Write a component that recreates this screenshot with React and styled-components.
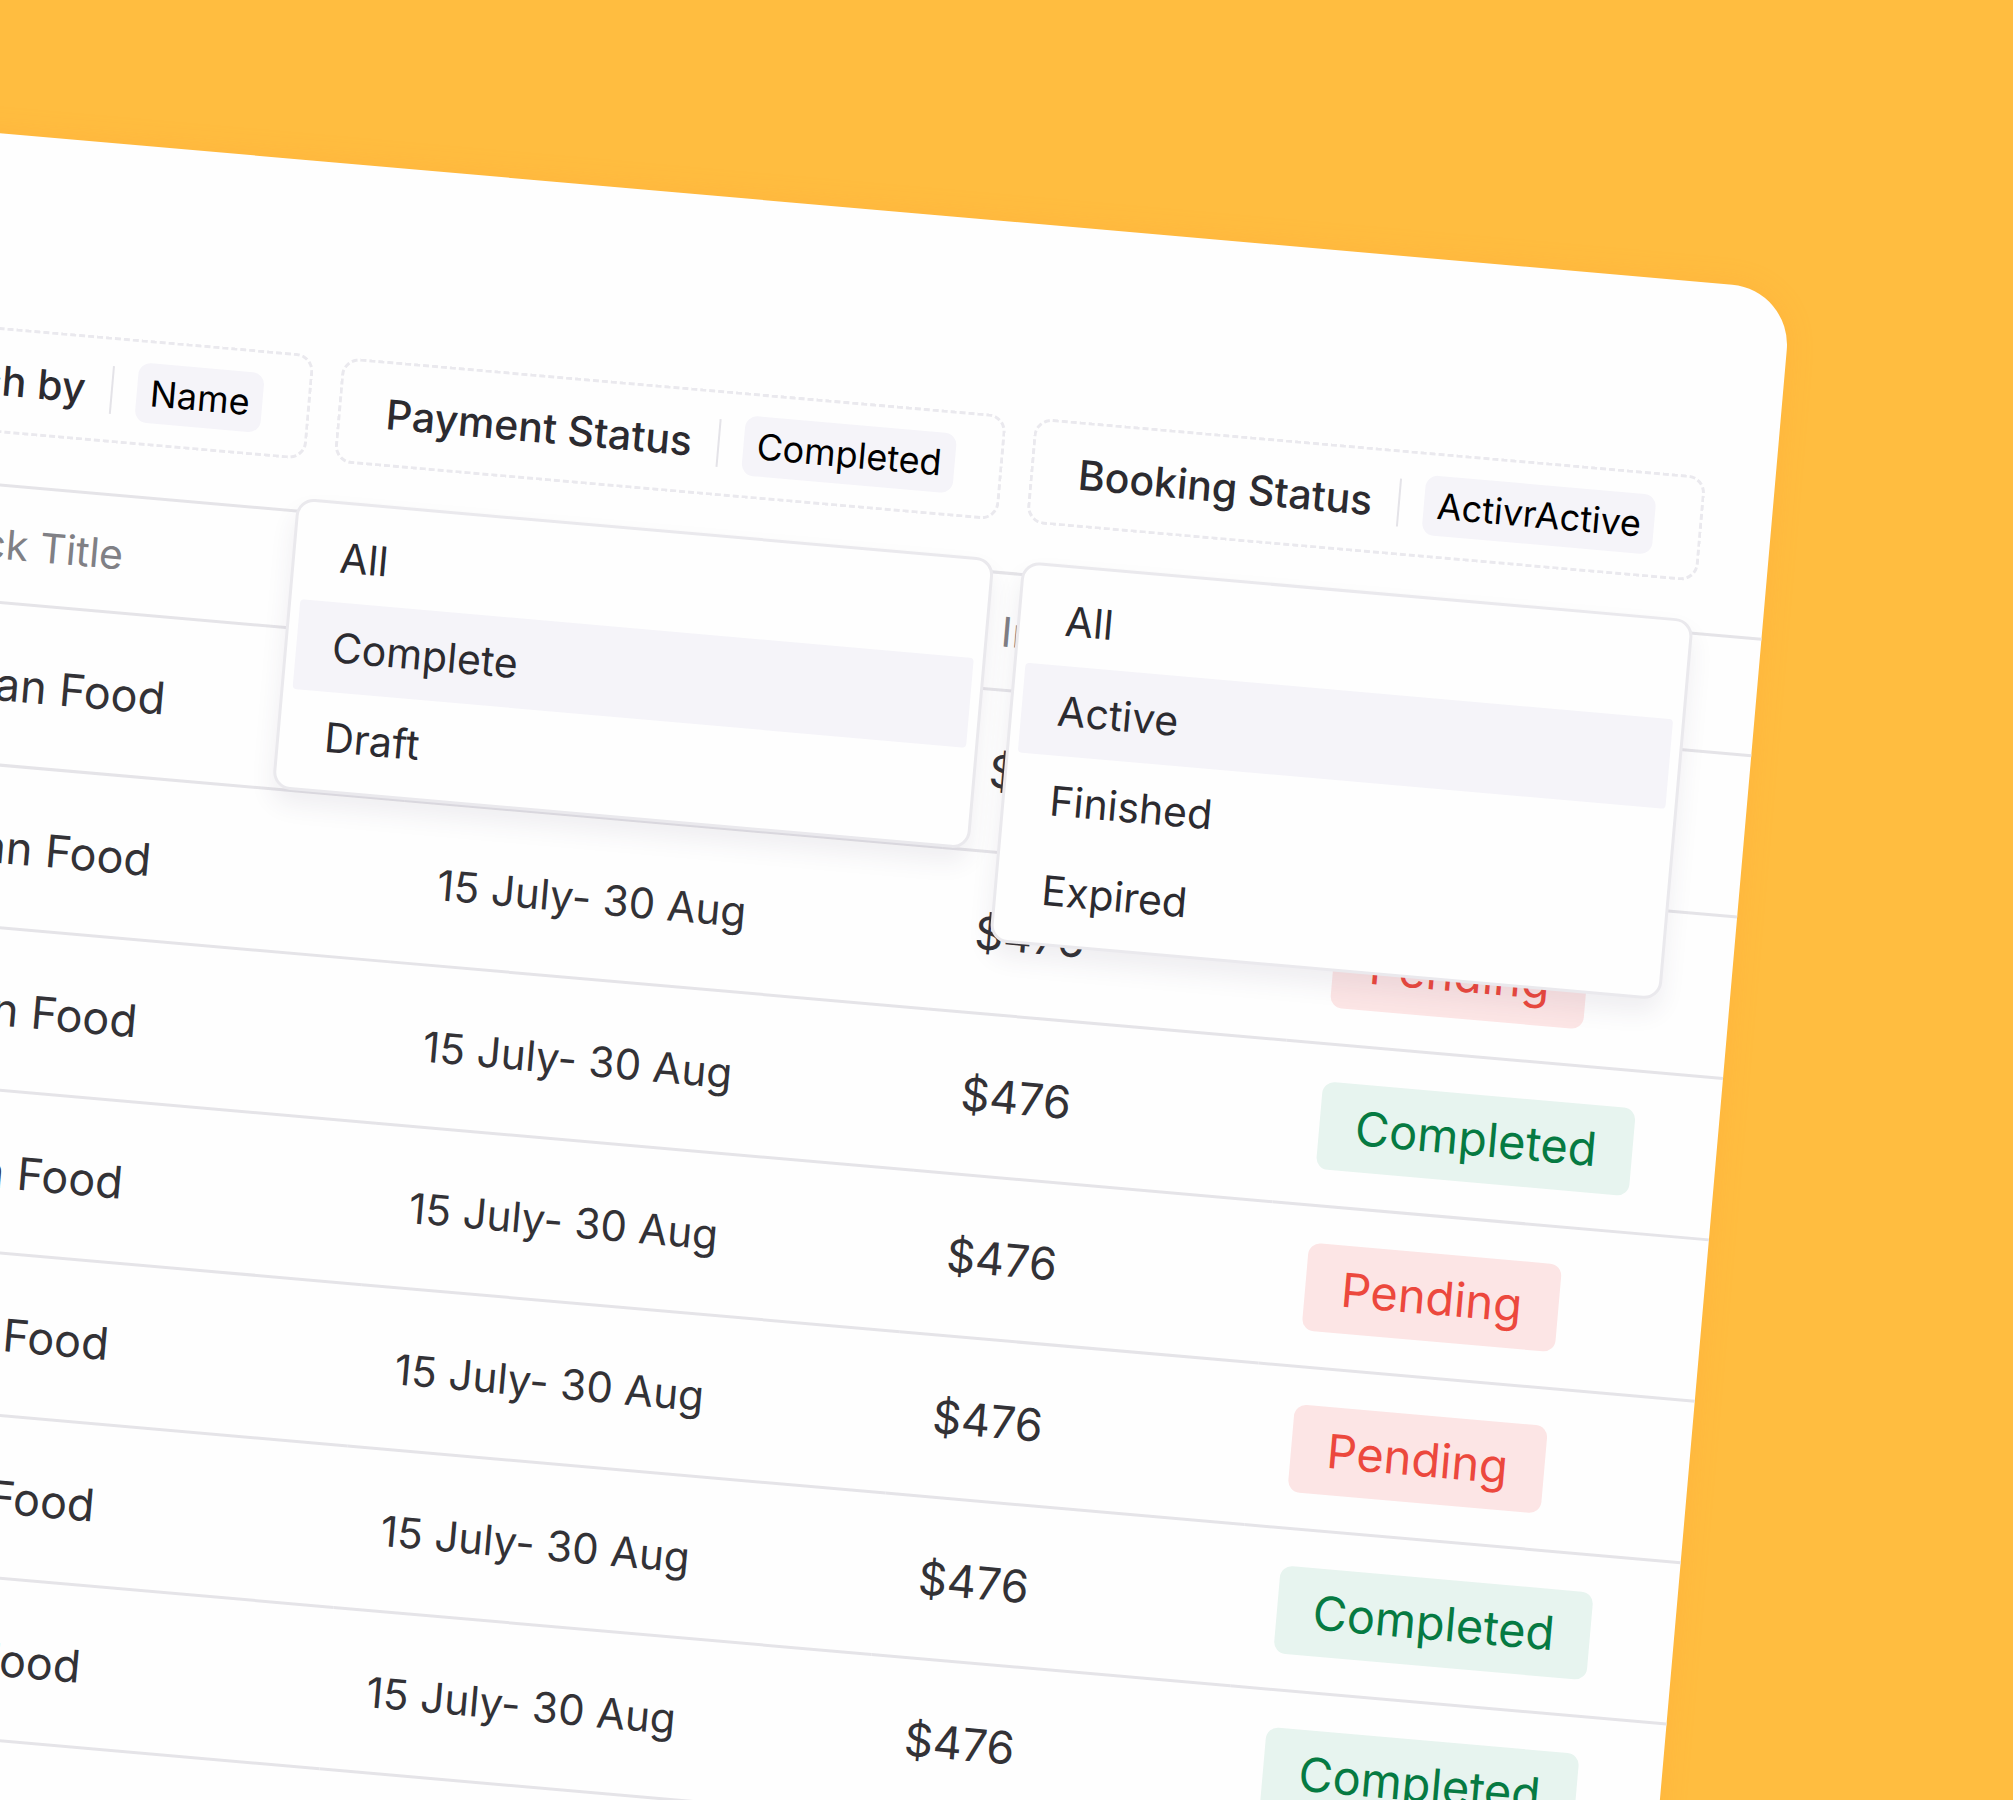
import React, { Component } from "react"
import styled, { createGlobalStyle } from "styled-components"

const GlobalStyle = createGlobalStyle`
  * {
    box-sizing: border-box;
  }

  body {
    margin: 0;
    background: #ffbd40;
  }

  button {
    font: inherit;
    color: inherit;
    cursor: pointer;
  }
`

const Stage = styled.main`
  display: flow-root;
  height: 100vh;
  overflow: hidden;
  background: #ffbd40;
  font-family: Inter, 'Open Sans', sans-serif;
  color: #2c2b30;
`

const Sheet = styled.section`
  margin: 290px 221px 0 -102px;
  padding-top: 193px;
  min-height: 100vh;
  background: #fefefe;
  border-radius: 60px;
  box-shadow: 0 0 28px rgba(255, 150, 50, 0.2);
  transform: rotate(5deg);
  transform-origin: top right;
`

const Filters = styled.div`
  display: flex;
  justify-content: flex-end;
  gap: 28px;
  margin-bottom: 50px;
  padding-right: 69px;
`

const FilterWrap = styled.div`
  position: relative;
  flex: none;
`

const FilterButton = styled.button`
  display: flex;
  align-items: center;
  height: 106px;
  padding: 0 45px;
  background: none;
  border: 3px dashed #eae9ee;
  border-radius: 18px;
`

const FilterLabel = styled.span`
  font-size: 41px;
  font-weight: 500;
  line-height: 48px;
  white-space: nowrap;
`

const Divider = styled.span`
  width: 2px;
  height: 48px;
  margin: 0 24px 0 26px;
  background: #e4e3e8;
`

const Chip = styled.span`
  padding: 6px 13px;
  font-size: 36px;
  line-height: 48px;
  color: #000;
  background: #f5f4f9;
  border-radius: 12px;
`

const Menu = styled.ul`
  position: absolute;
  top: 144px;
  right: 0;
  z-index: 1;
  width: ${({ $wide }) => ($wide ? '700px' : '100%')};
  margin: 0;
  padding: 8px 9px;
  list-style: none;
  background: #fefefe;
  border: 3px solid #eae9ed;
  border-radius: 18px;
  box-shadow: 0 14px 24px rgba(60, 50, 90, 0.08);
`

const MenuItem = styled.button`
  display: block;
  width: 100%;
  height: 90px;
  padding: 0 36px;
  font-size: 41px;
  line-height: 48px;
  text-align: left;
  background: ${({ $active }) => ($active ? '#f5f4f9' : 'none')};
  border: 0;
  border-radius: 4px;
`

const Table = styled.table`
  width: 100%;
  table-layout: fixed;
  border-collapse: separate;
  border-spacing: 0;
  border-top: 3px solid #e5e4e8;
`

const Col = styled.col`
  width: ${({ $width }) => $width};
`

const Th = styled.th`
  height: 117px;
  padding: 0 40px;
  font-size: 41px;
  font-weight: 400;
  text-align: left;
  color: #808085;
  border-bottom: 3px solid #e5e4e8;
`

const Td = styled.td`
  height: 162px;
  padding: 0 40px;
  font-size: ${({ $small }) => ($small ? '42px' : '45px')};
  color: #333236;
  white-space: nowrap;
  border-bottom: 3px solid #e5e4e8;
`

const Pill = styled.span`
  display: inline-block;
  padding: 0 36px;
  font-size: 47px;
  line-height: 88px;
  border-radius: 12px;
  color: ${({ $done }) => ($done ? '#067a42' : '#ec483d')};
  background: ${({ $done }) => ($done ? '#e7f4ef' : '#fce5e5')};
`

const filters = [
  { label: 'Search by', value: 'Name' },
  {
    label: 'Payment Status',
    value: 'Completed',
    options: ['All', 'Complete', 'Draft'],
    selected: 'Complete',
    wide: true,
  },
  {
    label: 'Booking Status',
    value: 'ActivrActive',
    options: ['All', 'Active', 'Finished', 'Expired'],
    selected: 'Active',
  },
]

const statuses = [
  'Completed',
  'Pending',
  'Completed',
  'Pending',
  'Pending',
  'Completed',
  'Completed',
  'Pending',
]

const bookings = statuses.map((status, id) => ({
  id,
  title: 'Korean Food',
  date: '15 July- 30 Aug',
  invoice: '$476',
  status,
}))

const Filter = ({ label, value, options, selected, wide, onSelect }) => (
  <FilterWrap>
    <FilterButton type="button" aria-expanded={!!options}>
      <FilterLabel>{label}</FilterLabel>
      <Divider />
      <Chip>{value}</Chip>
    </FilterButton>

    {options && (
      <Menu $wide={wide} aria-label={label}>
        {options.map(option => (
          <li key={option}>
            <MenuItem
              type="button"
              $active={option === selected}
              onClick={() => onSelect(label, option)}
            >
              {option}
            </MenuItem>
          </li>
        ))}
      </Menu>
    )}
  </FilterWrap>
)

class App extends Component {
  state = {
    selected: {}
  }

  select = (label, option) => {
    this.setState({ selected: { ...this.state.selected, [label]: option } })
  }

  render() {
    const { selected } = this.state
    return (
      <Stage>
        <GlobalStyle />

        <Sheet>
          <Filters>
            {filters.map(filter => (
              <Filter
                key={filter.label}
                {...filter}
                selected={selected[filter.label] || filter.selected}
                onSelect={this.select}
              />
            ))}
          </Filters>

          <Table>
            <colgroup>
              <Col $width="auto" />
              <Col $width="540px" />
              <Col $width="360px" />
              <Col $width="438px" />
            </colgroup>
            <thead>
              <tr>
                <Th scope="col">Snack Title</Th>
                <Th scope="col">Date</Th>
                <Th scope="col">Invoice</Th>
                <Th scope="col">Status</Th>
              </tr>
            </thead>
            <tbody>
              {bookings.map(({ id, title, date, invoice, status }) => (
                <tr key={id}>
                  <Td>{title}</Td>
                  <Td $small>{date}</Td>
                  <Td>{invoice}</Td>
                  <Td>
                    <Pill $done={status === 'Completed'}>{status}</Pill>
                  </Td>
                </tr>
              ))}
            </tbody>
          </Table>
        </Sheet>
      </Stage>
    )
  }
}

export default App
